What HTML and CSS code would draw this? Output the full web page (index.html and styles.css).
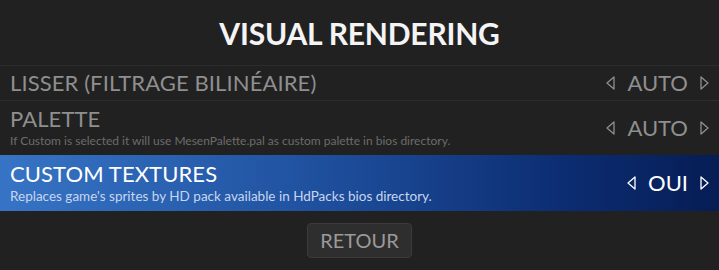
FILE: index.html
```html
<!DOCTYPE html>
<html>
<head>
<meta charset="utf-8">
<link rel="stylesheet" href="styles.css">
</head>
<body>
<div class="screen">
  <h1 class="title">VISUAL RENDERING</h1>
  <div class="list">
    <div class="row">
      <div class="text">
        <div class="label">LISSER (FILTRAGE BILINÉAIRE)</div>
      </div>
      <div class="value">
        <svg class="arrow" viewBox="0 0 9 14" width="9" height="14"><path d="M8 1 L1 7 L8 13 Z" fill="none" stroke="currentColor" stroke-width="1.3" stroke-linejoin="round"/></svg>
        <span class="val">AUTO</span>
        <svg class="arrow" viewBox="0 0 9 14" width="9" height="14"><path d="M1 1 L8 7 L1 13 Z" fill="none" stroke="currentColor" stroke-width="1.3" stroke-linejoin="round"/></svg>
      </div>
    </div>
    <div class="row">
      <div class="text">
        <div class="label">PALETTE</div>
        <div class="desc">If Custom is selected it will use MesenPalette.pal as custom palette in bios directory.</div>
      </div>
      <div class="value">
        <svg class="arrow" viewBox="0 0 9 14" width="9" height="14"><path d="M8 1 L1 7 L8 13 Z" fill="none" stroke="currentColor" stroke-width="1.3" stroke-linejoin="round"/></svg>
        <span class="val">AUTO</span>
        <svg class="arrow" viewBox="0 0 9 14" width="9" height="14"><path d="M1 1 L8 7 L1 13 Z" fill="none" stroke="currentColor" stroke-width="1.3" stroke-linejoin="round"/></svg>
      </div>
    </div>
    <div class="row selected">
      <div class="text">
        <div class="label">CUSTOM TEXTURES</div>
        <div class="desc">Replaces game's sprites by HD pack available in HdPacks bios directory.</div>
      </div>
      <div class="value">
        <svg class="arrow" viewBox="0 0 9 14" width="9" height="14"><path d="M8 1 L1 7 L8 13 Z" fill="none" stroke="currentColor" stroke-width="1.3" stroke-linejoin="round"/></svg>
        <span class="val">OUI</span>
        <svg class="arrow" viewBox="0 0 9 14" width="9" height="14"><path d="M1 1 L8 7 L1 13 Z" fill="none" stroke="currentColor" stroke-width="1.3" stroke-linejoin="round"/></svg>
      </div>
    </div>
  </div>
  <div class="footer">
    <button class="btn">RETOUR</button>
  </div>
</div>
</body>
</html>
```
FILE: styles.css
```css
html, body {
  margin: 0;
  padding: 0;
  background: #212121;
}
.screen {
  width: 719px;
  height: 270px;
  background: #212121;
  font-family: Lato, "Open Sans", sans-serif;
  overflow: hidden;
}
.title {
  margin: 0;
  height: 65px;
  display: flex;
  align-items: center;
  justify-content: center;
  color: #f4f4f4;
  font-size: 30px;
  font-weight: 700;
  letter-spacing: -0.2px;
  border-bottom: 1px solid #2c2c2c;
  box-sizing: border-box;
  height: 66px;
}
.list {
  display: flex;
  flex-direction: column;
}
.row {
  display: flex;
  align-items: center;
  justify-content: space-between;
  padding: 0 10px;
  color: #8f8f8f;
  border-bottom: 1px solid #2c2c2c;
}
.row:first-child {
  height: 34px;
}
.row:nth-child(2) {
  height: 54px;
  border-bottom: none;
}
.row.selected {
  height: 56px;
  border-bottom: none;
  color: #ffffff;
  background: linear-gradient(90deg, #3774c5 0%, #2154a3 40%, #0c2d72 78%, #061d55 100%);
}
.text {
  display: flex;
  flex-direction: column;
}
.label {
  font-size: 22px;
  line-height: 24px;
  letter-spacing: 0.1px;
}
.desc {
  font-size: 12px;
  line-height: 16px;
  color: #6c6c6c;
  margin-top: 2px;
}
.selected .desc {
  font-size: 13.5px;
  color: #c7d6ef;
}
.value {
  display: flex;
  align-items: center;
  gap: 12px;
}
.val {
  font-size: 22px;
  line-height: 24px;
}
.arrow {
  display: block;
}
.footer {
  display: flex;
  justify-content: center;
  padding-top: 12px;
}
.btn {
  font-family: Lato, "Open Sans", sans-serif;
  font-size: 20px;
  color: #9a9a9a;
  background: #2e2e2e;
  border: 1px solid #3b3b3b;
  border-radius: 4px;
  height: 35px;
  width: 105px;
  padding: 0;
  line-height: 33px;
}
```
